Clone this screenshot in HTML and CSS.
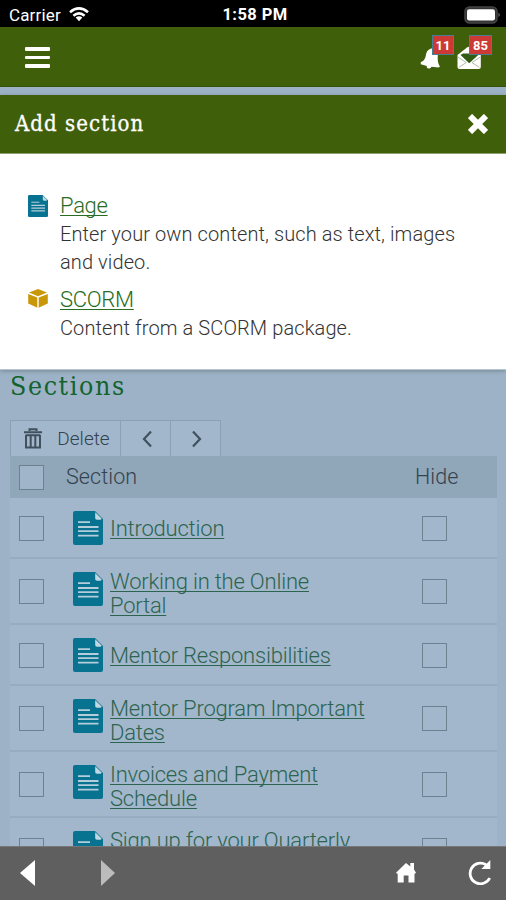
FILE: index.html
```html
<!DOCTYPE html>
<html lang="en">
<head>
<meta charset="utf-8">
<title>Add section</title>
<link rel="stylesheet" href="styles.css">
</head>
<body>
<svg width="0" height="0" class="defs" aria-hidden="true">
  <symbol id="doc" viewBox="0 0 30 34">
    <path fill="#087391" d="M2 0H22L30 8V32Q30 34 28 34H2Q0 34 0 32V2Q0 0 2 0Z"/>
    <path class="fold" d="M22.2 1.2L28.6 7.6Q28.4 8.8 27 8.8H24Q22.2 8.8 22.2 7Z"/>
    <path class="rules" d="M5 11.2H17M5 16H25.5M5 20.2H25.5M5 24.6H25.5" fill="none" stroke-width="1.8"/>
  </symbol>
</svg>
<div class="phone">
  <div class="status">
    <div class="carrier"><span>Carrier</span>
      <svg width="20" height="15" viewBox="0 0 20 15" fill="none" stroke="#fff" stroke-width="2.6"><path d="M1 5.2Q10-2.4 19 5.2M4.4 8.7Q10 4 15.6 8.7"/><path fill="#fff" stroke="none" d="M6.7 10.5Q10 8 13.3 10.5L10 14.3Z"/></svg>
    </div>
    <div class="time">1:58 PM</div>
    <svg class="battery" width="37" height="18" viewBox="0 0 37 18"><rect x="1" y="1" width="32" height="16" rx="4.5" fill="#333" stroke="#444" stroke-width="1.5"/><rect x="3" y="3.3" width="28" height="11.2" rx="2.2" fill="#fff"/><path d="M34.5 6.5Q37 8.8 34.5 11Z" fill="#777"/></svg>
  </div>
  <header class="nav">
    <div class="menu"><i></i><i></i><i></i></div>
    <div class="alerts">
      <div class="alert bell">
        <svg width="24" height="24" viewBox="0 0 24 24" fill="#fff"><path d="M11 2C15 .5 19 3 18.8 8C18.6 13 18.7 16 21 19.5L19.5 20.6L12.4 19.8Q12 22 9.4 21.5Q7.2 21 7.8 19L1.8 17.2Q1 15 3 14.6Q6 13 6.8 8.4Q7.5 3.5 11 2Z"/></svg>
        <b class="badge">11</b>
      </div>
      <div class="alert mail">
        <svg width="24" height="24" viewBox="0 0 24 24"><path fill="#fff" d="M.5 9L10 1.4Q12 0 14 1.4L23.8 9V21Q23.8 23 21.8 23H2.5Q.5 23 .5 21Z"/><path fill="#315b12" d="M3.5 9L6 7.5H19L21.3 9L12.2 17.2Z"/><path d="M1 11L9.2 16.6L2 21.3M23.3 11L15 16.6L22.4 21.3" fill="none" stroke="#9cab8e" stroke-width=".8"/></svg>
        <b class="badge">85</b>
      </div>
    </div>
  </header>
  <section class="dialog">
    <div class="dialog-head">
      <h2>Add section</h2>
      <svg width="20" height="20" viewBox="0 0 20 20" stroke="#fff" stroke-width="6"><path d="M2 2L18 18M18 2L2 18"/></svg>
    </div>
    <div class="choices">
      <div class="choice">
        <svg class="choice-icon page-icon" width="20" height="22" viewBox="0 0 30 34" preserveAspectRatio="none"><use href="#doc" width="30" height="34"/></svg>
        <div><a>Page</a><p>Enter your own content, such as text, images<br>and video.</p></div>
      </div>
      <div class="choice">
        <svg class="choice-icon scorm-icon" width="20" height="19" viewBox="0 0 20 19" fill="#c99809"><path d="M10 0L19 3.4L10 7.2L1 3.4ZM.2 5L9.3 8.6V18.8L.2 14.4ZM19.8 5L10.7 8.6V18.8L19.8 14.4Z"/></svg>
        <div><a>SCORM</a><p>Content from a SCORM package.</p></div>
      </div>
    </div>
  </section>
  <main class="page">
    <h1>Sections</h1>
    <div class="tools">
      <button class="delete"><svg width="20" height="21" viewBox="0 0 20 21" fill="none" stroke="#40505e" stroke-width="2"><path d="M1 4.2H19M6.5 3V1.2H13.5V3" /><path d="M2.8 7.2H17.2M3 7V19.5H17V7M7.7 7V19M12.3 7V19"/></svg><span>Delete</span></button>
      <button><svg width="12" height="18" viewBox="0 0 12 18"><path d="M10 1.5L3 9L10 16.5" fill="none" stroke="#40505e" stroke-width="2.2"/></svg></button>
      <button><svg width="12" height="18" viewBox="0 0 12 18"><path d="M2 1.5L9 9L2 16.5" fill="none" stroke="#40505e" stroke-width="2.2"/></svg></button>
    </div>
    <div class="row head"><i class="check"></i><span>Section</span><span>Hide</span></div>
    <div class="row single"><i class="check"></i><svg class="file"><use href="#doc"/></svg><a>Introduction</a><i class="check hide"></i></div>
    <div class="row"><i class="check"></i><svg class="file"><use href="#doc"/></svg><a>Working in the Online<br>Portal</a><i class="check hide"></i></div>
    <div class="row single"><i class="check"></i><svg class="file"><use href="#doc"/></svg><a>Mentor Responsibilities</a><i class="check hide"></i></div>
    <div class="row"><i class="check"></i><svg class="file"><use href="#doc"/></svg><a>Mentor Program Important<br>Dates</a><i class="check hide"></i></div>
    <div class="row"><i class="check"></i><svg class="file"><use href="#doc"/></svg><a>Invoices and Payment<br>Schedule</a><i class="check hide"></i></div>
    <div class="row"><i class="check"></i><svg class="file"><use href="#doc"/></svg><a>Sign up for your Quarterly</a><i class="check hide"></i></div>
  </main>
  <footer class="browser">
    <svg width="16" height="26" viewBox="0 0 16 26"><path d="M15 0V26L0 13Z" fill="#fff"/></svg>
    <svg class="fwd" width="16" height="26" viewBox="0 0 16 26"><path d="M1 0V26L15 13Z" fill="#bcbcbc"/></svg>
    <svg class="home" width="20" height="21" viewBox="0 0 20 21"><path d="M10 1L14.3 4.5V1H18V7.5L20 10.8L18.5 12V20.5H12.5V13.5H7.7V20.5H1.7V12L0 10.8Z" fill="#fff"/></svg>
    <svg class="reload" width="24" height="25" viewBox="0 0 24 25"><path d="M21.7 18A10.3 10.3 0 1 1 18 4.8" fill="none" stroke="#fff" stroke-width="2.8"/><path d="M22.3 0V9H13.3Z" fill="#fff"/></svg>
  </footer>
</div>
</body>
</html>
```
FILE: styles.css
```css
* { box-sizing: border-box; }
body { margin: 0; background: #9db2c6; font-family: Roboto, "Liberation Sans", sans-serif; font-weight: 300; }
.defs { display: block; position: absolute; }
.phone { width: 506px; height: 900px; display: flex; flex-direction: column; overflow: hidden; }
svg { display: block; flex: none; }
h1, h2, p { margin: 0; }
h1, h2 { font-family: "Roboto Slab", "DejaVu Serif Condensed", "DejaVu Serif", serif; font-stretch: condensed; font-weight: 400; white-space: nowrap; }

.status { height: 27px; flex: none; background: #000; color: #fff; display: grid; grid-template-columns: 1fr auto 1fr; align-items: center; padding: 2px 5px 0 9px; font: 400 17px/24px Roboto, sans-serif; }
.carrier { display: flex; align-items: center; gap: 8px; letter-spacing: .15px; }
.time { font-weight: 700; font-size: 16.5px; letter-spacing: .4px; }
.battery { justify-self: end; }

.nav { height: 60px; flex: none; background: #405f0b; border-bottom: 1px solid #35510a; display: flex; justify-content: space-between; padding: 20px 25px 0; }
.menu { width: 25px; display: flex; flex-direction: column; gap: 5px; }
.menu i { height: 3.5px; background: #fff; border-radius: 1px; }
.alerts { display: flex; gap: 14px; }
.alert { position: relative; width: 24px; height: 24px; }
.badge { position: absolute; left: 13px; top: -12px; width: 22px; height: 20px; background: #cd3a35; border: 1px solid #477f91; color: #fff; font: 700 13px/19px Roboto, sans-serif; text-align: center; }
.mail .badge { left: 12px; width: 23px; }
.mail svg { margin-top: -1px; }

.dialog { margin-top: 8px; height: 275px; flex: none; background: #fff; border-bottom: 1px solid #b8c3d5; box-shadow: 0 1px 4px #71888f; z-index: 1; }
.dialog-head { height: 59px; background: #405f0b; border-bottom: 1px solid #90a071; display: flex; justify-content: space-between; align-items: center; padding: 0 18px 0 15px; color: #fff; }
h2 { font-size: 22px; line-height: 30px; letter-spacing: 1.05px; -webkit-text-stroke: .3px #fff; }
.choices { padding: 38px 28px 0; font-size: 20px; line-height: 28px; color: #333; white-space: nowrap; letter-spacing: .1px; }
.choice { display: flex; gap: 12px; height: 94px; }
.choice-icon { margin-top: 3px; }
.choice a { color: #286d22; font-size: 22px; letter-spacing: -.3px; text-decoration: underline; text-decoration-skip-ink: none; text-decoration-thickness: 1px; text-underline-offset: 2px; }
.fold { fill: #c2d7e2; }
.rules { stroke: #b5cddb; }

.page { flex: 1; min-height: 0; overflow: hidden; padding: 1px 9px 0 10px; background: #9db2c6; }
h1 { color: #12632e; font-size: 26.5px; line-height: 30px; letter-spacing: 1.6px; }
.tools { display: flex; margin-top: 19px; height: 36px; }
.tools button { width: 51px; margin-left: -1px; border: 1px solid #8ba0b1; border-bottom: 0; background: #a2b7cc; padding: 0 0 0 2px; display: flex; align-items: center; justify-content: center; font: 300 19px/24px Roboto, sans-serif; color: #33434f; }
.tools .delete { width: 111px; margin-left: 0; gap: 14px; }
.row { display: grid; grid-template-columns: 63px 37px 304px 1fr; height: 66px; background: #a2b7cb; border-bottom: 2px solid #97adbf; align-items: start; color: #2d6450; font-size: 22px; line-height: 24.5px; white-space: nowrap; letter-spacing: -.2px; }
.row.head { grid-template-columns: 56px 349px 1fr; height: 42px; align-items: center; background: #90a6b9; border: 0; color: #34434f; font-size: 21.5px; letter-spacing: .1px; }
.row a { padding-top: 10.5px; text-decoration: underline; text-decoration-skip-ink: none; text-decoration-thickness: 1px; text-underline-offset: 2px; }
.single { height: 61px; }
.row.single a { padding-top: 19px; }
.check { width: 25px; height: 25px; border: 1px solid #6c8290; margin: 20px 0 0 9px; }
.single .check { margin-top: 17.5px; }
.row .check.hide { margin-left: 8px; }
.head .check { margin-top: 0; background: #a0b5c9; }
.file { width: 30px; height: 34px; margin-top: 13px; }

.browser { height: 54px; flex: none; background: #5f5f5f; border-top: 1px solid #777; display: flex; align-items: center; padding: 0 14px 2px 20px; }
.fwd { margin-left: 64px; }
.home { margin-left: auto; }
.reload { margin-left: 52px; }
```
